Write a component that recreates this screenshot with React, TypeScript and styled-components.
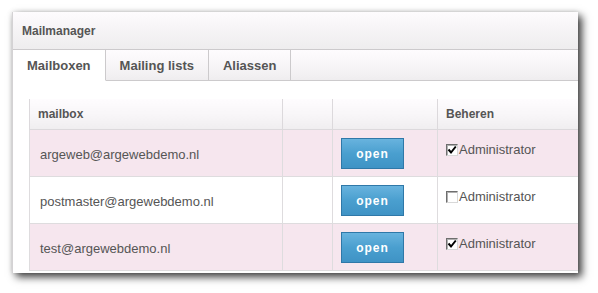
import styled, { createGlobalStyle } from 'styled-components'

const GlobalStyle = createGlobalStyle`
  html, body {
    margin: 0;
    padding: 0;
    background: #ffffff;
  }
  body {
    font-family: 'Liberation Sans', Arial, sans-serif;
  }
`

type Mailbox = {
  address: string
  admin: boolean
}

const mailboxes: Mailbox[] = [
  { address: 'argeweb@argewebdemo.nl', admin: true },
  { address: 'postmaster@argewebdemo.nl', admin: false },
  { address: 'test@argewebdemo.nl', admin: true },
]

const tabs = ['Mailboxen', 'Mailing lists', 'Aliassen']

export default function App() {
  return (
    <Page>
      <GlobalStyle />
      <Panel>
        <Header>Mailmanager</Header>
        <TabBar>
          {tabs.map((tab, i) => (
            <Tab key={tab} active={i === 0}>
              {tab}
            </Tab>
          ))}
          <TabFiller />
        </TabBar>
        <Content>
          <Table>
            <colgroup>
              <col style={{ width: 253 }} />
              <col style={{ width: 50 }} />
              <col style={{ width: 105 }} />
              <col style={{ width: 141 }} />
            </colgroup>
            <thead>
              <tr>
                <HeadCell>mailbox</HeadCell>
                <HeadCell />
                <HeadCell />
                <HeadCell>Beheren</HeadCell>
              </tr>
            </thead>
            <tbody>
              {mailboxes.map((box, i) => (
                <Row key={box.address} striped={i % 2 === 0}>
                  <AddressCell>{box.address}</AddressCell>
                  <Cell />
                  <ButtonCell>
                    <OpenButton>open</OpenButton>
                  </ButtonCell>
                  <ManageCell>
                    <CheckLabel>
                      <CheckBox>
                        {box.admin && (
                          <svg width="10" height="10" viewBox="0 0 10 10">
                            <path d="M1.5 4.5 L4 7.5 L8.8 1.5" stroke="#000" strokeWidth="2" fill="none" />
                          </svg>
                        )}
                      </CheckBox>
                      Administrator
                    </CheckLabel>
                  </ManageCell>
                </Row>
              ))}
            </tbody>
          </Table>
        </Content>
      </Panel>
    </Page>
  )
}

const Page = styled.div`
  width: 598px;
  height: 293px;
  padding: 12px 0 0 12px;
  box-sizing: border-box;
`

const Panel = styled.div`
  width: 566px;
  height: 261px;
  background: #ffffff;
  border-left: 1px solid #d4d2d4;
  box-sizing: border-box;
  overflow: hidden;
  box-shadow: 4px 4px 8px rgba(0, 0, 0, 0.75), 0 0 5px rgba(0, 0, 0, 0.15);
  display: flex;
  flex-direction: column;
`

const Header = styled.div`
  height: 37px;
  flex-shrink: 0;
  display: flex;
  align-items: center;
  padding: 0 0 0 9px;
  background: linear-gradient(#fefcfe, #f7f5f7 40%, #eeedee);
  border-bottom: 1px solid #cccacc;
  color: #555555;
  font-size: 12px;
  font-weight: bold;
`

const TabBar = styled.div`
  height: 31px;
  flex-shrink: 0;
  display: flex;
`

const Tab = styled.div<{ active?: boolean }>`
  display: flex;
  align-items: center;
  padding: 1px 14px 0 14px;
  border-right: 1px solid #cccacc;
  border-bottom: 1px solid ${({ active }) => (active ? 'transparent' : '#cccacc')};
  background: ${({ active }) => (active ? '#ffffff' : 'linear-gradient(#fefcfe, #f6f4f6 60%, #efedef)')};
  color: #555555;
  font-size: 13px;
  font-weight: bold;
`

const TabFiller = styled.div`
  flex: 1;
  border-bottom: 1px solid #cccacc;
  background: linear-gradient(#fefcfe, #f6f4f6 60%, #efedef);
`

const Content = styled.div`
  padding: 18px 0 0 16px;
`

const Table = styled.table`
  width: 549px;
  border-collapse: collapse;
  table-layout: fixed;
  color: #555555;
`

const HeadCell = styled.th`
  height: 30px;
  padding: 0 0 0 8px;
  text-align: left;
  font-size: 12px;
  font-weight: bold;
  background: linear-gradient(#fefcfe, #f8f6f8 50%, #f0eef0);
  border: 1px solid #dcd9dc;
  border-top: none;
`

const Row = styled.tr<{ striped?: boolean }>`
  height: 47px;
  background: ${({ striped }) => (striped ? '#f6e6ee' : '#ffffff')};
`

const Cell = styled.td`
  border: 1px solid #dedcde;
  padding: 0;
`

const AddressCell = styled(Cell)`
  padding: 2px 0 0 10px;
  font-size: 13px;
  vertical-align: middle;
`

const ButtonCell = styled(Cell)`
  padding: 8px 0 0 8px;
  vertical-align: top;
`

const OpenButton = styled.button`
  width: 63px;
  height: 31px;
  border: 1px solid #2f78a8;
  background: linear-gradient(#68b3de, #4a9fcf 50%, #3f93c5);
  color: #ffffff;
  font-family: 'Liberation Sans', Arial, sans-serif;
  font-size: 12px;
  font-weight: bold;
  letter-spacing: 1px;
  padding: 0;
  cursor: pointer;
`

const ManageCell = styled(Cell)`
  padding: 12px 0 0 8px;
  vertical-align: top;
`

const CheckLabel = styled.label`
  display: flex;
  align-items: center;
  gap: 1px;
  font-size: 13px;
  line-height: 15px;
`

const CheckBox = styled.span`
  width: 12px;
  height: 12px;
  box-sizing: border-box;
  display: inline-flex;
  align-items: center;
  justify-content: center;
  background: #ffffff;
  border-top: 1px solid #6e6e6e;
  border-left: 1px solid #6e6e6e;
  border-right: 1px solid #d8d8d8;
  border-bottom: 1px solid #d8d8d8;
  box-shadow: inset 1px 1px 0 #b0b0b0;
`
